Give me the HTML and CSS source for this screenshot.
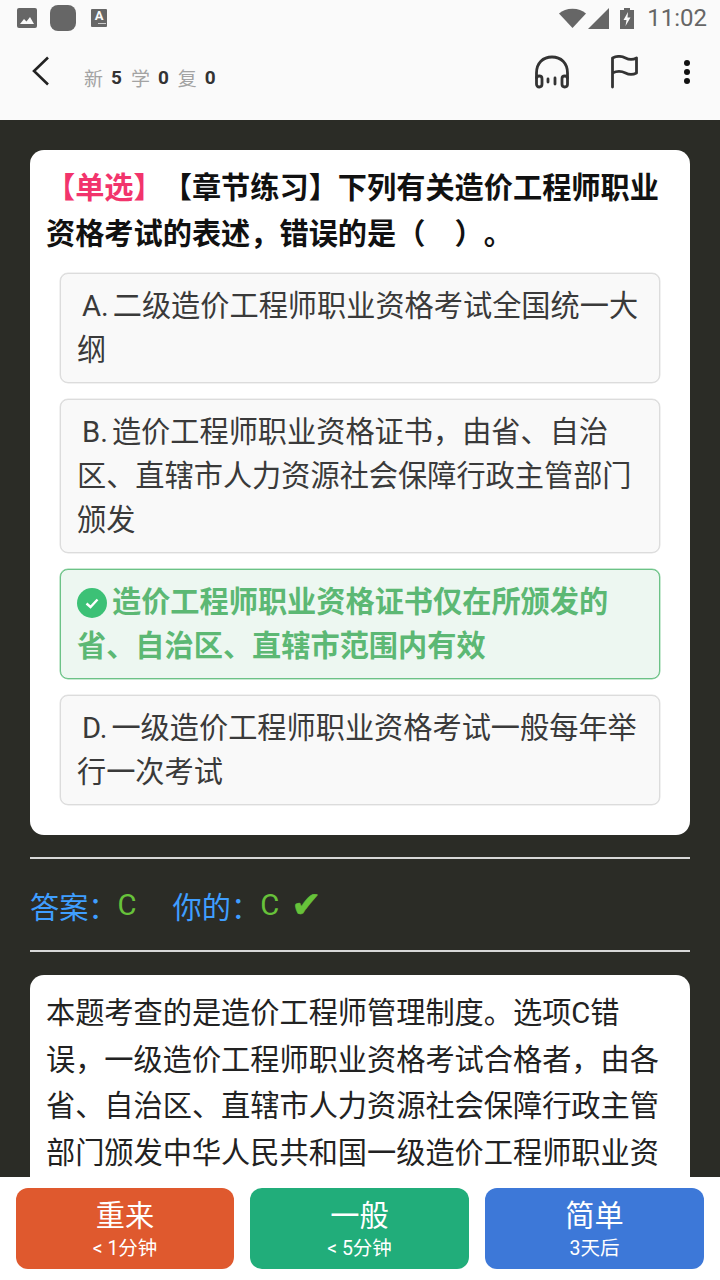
FILE: index.html
```html
<!DOCTYPE html>
<html lang="zh-CN">
<head>
    <meta charset="UTF-8">
    <meta name="viewport" content="width=device-width, initial-scale=1.0">
    <title>章节练习</title>
    <link rel="stylesheet" href="styles.css">
</head>
<body>
    <div class="app">
        <div class="status-bar">
            <div class="status-left">
                <svg class="st-img" width="20" height="20" viewBox="0 0 20 20"><rect width="20" height="20" rx="2" fill="#666"/><path d="M3 16l4-5 2.500 2.500L13 9l4 7z" fill="#fafafa"/></svg>
                <div class="st-blob"></div>
                <div class="st-a"><span>A</span><i></i></div>
            </div>
            <div class="status-right">
                <svg width="27" height="20" viewBox="0 0 27 20"><path d="M0 5.500C3.500 2.500 8 .8 13.500.8S23.500 2.500 27 5.500L13.500 20z" fill="#666"/></svg>
                <svg class="st-signal" width="21" height="21" viewBox="0 0 21 21"><path d="M21 0v21H0z" fill="#666"/></svg>
                <svg class="st-batt" width="14" height="21" viewBox="0 0 14 21"><path d="M4 0h6v2h4v19H0V2h4z" fill="#666"/><path d="M8 4L3.500 12H6.500L5.500 18 10.500 9.500H7.500z" fill="#fafafa"/></svg>
                <span class="st-time">11:02</span>
            </div>
        </div>
        <div class="header">
            <svg class="back" width="18" height="30" viewBox="0 0 18 30"><path d="M16 1.500L2 15l14 13.500" fill="none" stroke="#222" stroke-width="2.600"/></svg>
            <div class="counts">
                <span>新</span><b>5</b><span>学</span><b>0</b><span>复</span><b>0</b>
            </div>
            <div class="header-icons">
                <svg width="36" height="34" viewBox="0 0 36 34" fill="none" stroke="#333" stroke-width="2.800" stroke-linecap="round">
                    <path d="M2.500 23V18C2.500 8 9 2 18 2s15.500 6 15.500 16v5"/>
                    <rect x="2.500" y="21" width="5.500" height="11" rx="2.700"/>
                    <rect x="28" y="21" width="5.500" height="11" rx="2.700"/>
                    <path d="M14 24v3M21 23v6"/>
                </svg>
                <svg class="flag" width="30" height="34" viewBox="0 0 30 34" fill="none" stroke="#333" stroke-width="2.800" stroke-linecap="round" stroke-linejoin="round">
                    <path d="M3.500 32V3c4-2 9-2 13 0s7 2 11 0v15c-4 2-7 2-11 0s-9-2-13 0"/>
                </svg>
                <div class="more"><i></i><i></i><i></i></div>
            </div>
        </div>

        <div class="content">
            <div class="card">
                <div class="question"><span class="tag">【单选】</span>【章节练习】下列有关造价工程师职业资格考试的表述，错误的是（&nbsp;&nbsp;&nbsp;&nbsp;）。</div>
                <div class="options">
                    <div class="option"><span class="key">A.</span>二级造价工程师职业资格考试全国统一大纲</div>
                    <div class="option"><span class="key">B.</span>造价工程师职业资格证书，由省、自治区、直辖市人力资源社会保障行政主管部门颁发</div>
                    <div class="option correct">
                        <svg class="tick" width="30" height="30" viewBox="0 0 30 30"><circle cx="15" cy="15" r="15" fill="#3cc176"/><path d="M9.500 15.500l4 3.500 7-7.500" fill="none" stroke="#fff" stroke-width="2.400"/></svg>造价工程师职业资格证书仅在所颁发的省、自治区、直辖市范围内有效
                    </div>
                    <div class="option"><span class="key">D.</span>一级造价工程师职业资格考试一般每年举行一次考试</div>
                </div>
            </div>
            <div class="answer">
                <span class="label">答案：</span><span class="val">C</span>
                <span class="label yours">你的：</span><span class="val">C</span>
                <span class="mark">✔</span>
            </div>
            <div class="card explain">本题考查的是造价工程师管理制度。选项C错误，一级造价工程师职业资格考试合格者，由各省、自治区、直辖市人力资源社会保障行政主管部门颁发中华人民共和国一级造价工程师职业资格证书。</div>
        </div>

        <div class="bottom">
            <div class="btn again"><div class="btn-title">重来</div><div class="btn-sub">&lt; 1分钟</div></div>
            <div class="btn normal"><div class="btn-title">一般</div><div class="btn-sub">&lt; 5分钟</div></div>
            <div class="btn easy"><div class="btn-title">简单</div><div class="btn-sub">3天后</div></div>
        </div>
    </div>
</body>
</html>
```

FILE: styles.css
```css
* {
    box-sizing: border-box;
}
body {
    margin: 0;
    font-family: Roboto, "Noto Sans CJK SC", sans-serif;
    text-spacing-trim: space-all;
}
.app {
    width: 720px;
    height: 1280px;
    display: flex;
    flex-direction: column;
    overflow: hidden;
    background-color: #2b2c26;
}
.status-bar {
    height: 40px;
    flex: none;
    display: flex;
    justify-content: space-between;
    align-items: center;
    padding: 0 13px 4px 17px;
    background-color: #fafafa;
}
.status-left, .status-right {
    display: flex;
    align-items: center;
}
.st-blob {
    width: 26px;
    height: 26px;
    margin-left: 13px;
    border-radius: 8px;
    background-color: #666;
}
.st-a {
    width: 16px;
    height: 18px;
    margin-left: 15px;
    border-radius: 1px;
    background-color: #666;
    color: #fafafa;
    font-size: 13px;
    font-weight: 700;
    line-height: 14px;
    text-align: center;
}
.st-a i {
    display: block;
    width: 8px;
    height: 1px;
    margin: 0 1px 0 auto;
    background-color: #ccc;
}
.st-signal {
    margin-left: 2px;
}
.st-batt {
    margin-left: 11px;
}
.st-time {
    margin-left: 13px;
    color: #666;
    font-size: 24px;
}
.header {
    height: 80px;
    flex: none;
    display: flex;
    align-items: center;
    padding: 0 30px 0 32px;
    background-color: #fafafa;
}
.back {
    margin-bottom: 18px;
}
.counts {
    margin-left: 34px;
    margin-top: -6px;
    font-size: 19px;
    display: flex;
    align-items: center;
    gap: 8px;
    color: #a3a3a3;
}
.counts b {
    color: #333;
    margin-right: 1px;
}
.header-icons {
    margin-left: auto;
    display: flex;
    align-items: center;
    gap: 39px;
    margin-bottom: 16px;
}
.flag {
    margin-right: 6px;
}
.more {
    display: flex;
    flex-direction: column;
    gap: 3px;
}
.more i {
    width: 6px;
    height: 6px;
    border-radius: 50%;
    background-color: #111;
}
.content {
    flex: 1;
    min-height: 0;
    overflow: hidden;
    padding: 30px 30px 0;
}
.card {
    background-color: #fff;
    border-radius: 14px;
    padding: 15px 26px 30px 16px;
    color: #111;
    font-size: 29.200px;
}
.question {
    font-weight: 700;
    line-height: 46px;
}
.tag {
    color: #f2346c;
}
.options {
    margin: 16px 4px 0 14px;
    display: flex;
    flex-direction: column;
    gap: 16px;
}
.option {
    padding: 10px 16px;
    background-color: #f9f9f9;
    border: 1px solid #dcdcdc;
    box-shadow: 0 0 0 .5px #e4e4e4;
    border-radius: 8px;
    line-height: 44px;
    color: #3a3a3a;
}
.key {
    margin-left: 5px;
    margin-right: 4px;
}
.correct {
    background-color: #edf7f1;
    border-color: #6cc287;
    box-shadow: 0 0 0 .5px #8fd3a4;
    color: #5cb874;
    font-weight: 700;
}
.tick {
    vertical-align: -6px;
    margin-right: 5px;
}
.answer {
    margin-top: 22px;
    height: 95px;
    border-top: 2px solid #d8d8d8;
    border-bottom: 2px solid #d8d8d8;
    display: flex;
    align-items: center;
    font-size: 29.200px;
}
.label {
    color: #3f9eff;
}
.yours {
    margin-left: 36px;
}
.val {
    color: #67c23a;
}
.mark {
    color: #67c23a;
    margin-left: 12px;
    font-family: "DejaVu Sans", sans-serif;
    font-size: 36px;
    -webkit-text-stroke: .6px #67c23a;
}
.explain {
    margin-top: 23px;
    padding: 15px 26px 14px 16px;
    line-height: 46.500px;
    color: #222;
}
.bottom {
    flex: none;
    height: 103px;
    display: flex;
    gap: 16px;
    padding: 11px 16px;
    background-color: #fff;
}
.btn {
    flex: 1;
    border-radius: 12px;
    color: #fff;
    text-align: center;
}
.btn-title {
    font-size: 29.200px;
    line-height: 36px;
    margin-top: 10px;
}
.btn-sub {
    font-size: 19.500px;
    line-height: 30px;
}
.again {
    flex: 0 0 218px;
    background-color: #df592e;
}
.normal {
    background-color: #21ad7a;
}
.easy {
    background-color: #3d78d8;
}
```
